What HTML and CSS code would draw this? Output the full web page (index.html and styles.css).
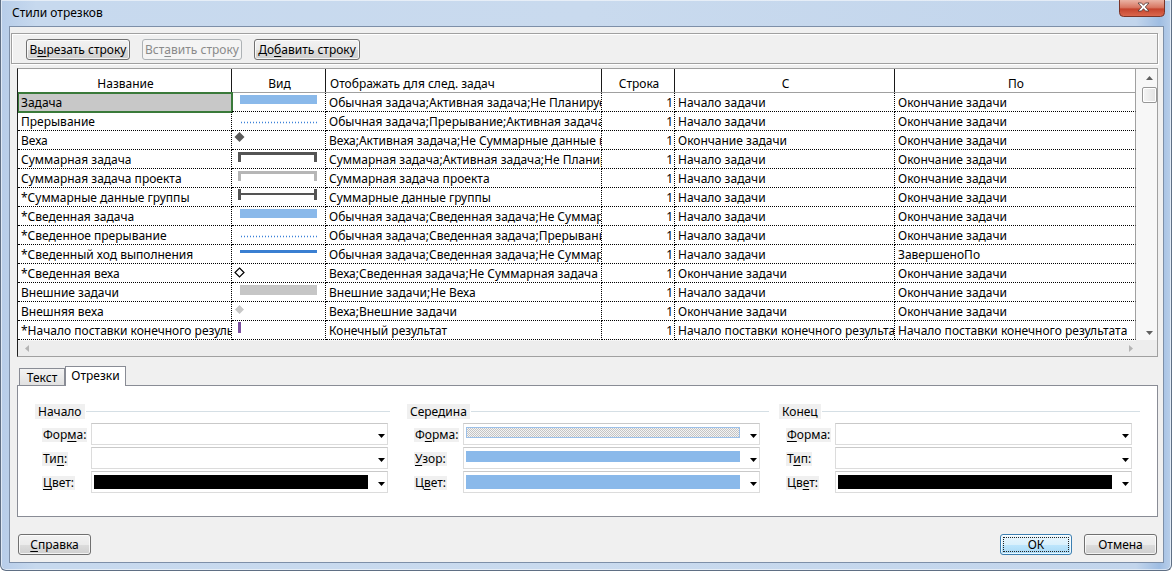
FILE: index.html
```html
<!DOCTYPE html>
<html lang="ru">
<head>
<meta charset="utf-8">
<title>Стили отрезков</title>
<link rel="stylesheet" href="styles.css">
</head>
<body>
<div class="desktop">
  <div class="window">
    <div class="titlebar">
      <span class="title">Стили отрезков</span>
      <span class="close">
        <svg width="46" height="17" viewBox="0 0 46 17">
          <defs>
            <linearGradient id="cg" x1="0" y1="0" x2="0" y2="1">
              <stop offset="0" stop-color="#eab3a5"/>
              <stop offset="0.45" stop-color="#d87763"/>
              <stop offset="0.55" stop-color="#c5442e"/>
              <stop offset="1" stop-color="#dc6a50"/>
            </linearGradient>
          </defs>
          <path d="M0.5 0 V12.5 Q0.5 16.5 4.5 16.5 H41.5 Q45.5 16.5 45.5 12.5 V0" fill="url(#cg)" stroke="#7a3428"/>
          <polygon points="19,3 22.5,3 24.5,5.3 26.5,3 30,3 26.3,7 30,11 26.5,11 24.5,8.7 22.5,11 19,11 22.7,7" fill="#fff" stroke="#4a3632" stroke-width="0.8"/>
        </svg>
      </span>
    </div>
    <div class="client">
      <div class="toolbar">
        <button class="btn btn-cut">В<u>ы</u>резать строку</button>
        <button class="btn btn-paste" disabled>Вст<u>а</u>вить строку</button>
        <button class="btn btn-add">До<u>б</u>авить строку</button>
      </div>

      <div class="grid">
        <div class="table">
          <div class="thead">
            <div class="h c1 hc">Название</div>
            <div class="h c2 hc">Вид</div>
            <div class="h c3">Отображать для след. задач</div>
            <div class="h c4 hc">Строка</div>
            <div class="h c5 hc">С</div>
            <div class="h c6 hc">По</div>
          </div>

          <div class="tr">
            <div class="d c1 sel">Задача</div>
            <div class="d c2"><svg class="vid" width="93" height="18"><rect x="8" y="2" width="77" height="9" fill="#8ab9ea"/></svg></div>
            <div class="d c3">Обычная задача;Активная задача;Не Планируемая вручную</div>
            <div class="d c4">1</div>
            <div class="d c5">Начало задачи</div>
            <div class="d c6">Окончание задачи</div>
          </div>
          <div class="tr">
            <div class="d c1">Прерывание</div>
            <div class="d c2"><svg class="vid" width="93" height="18"><line x1="9" y1="10.5" x2="85" y2="10.5" stroke="#3a80d8" stroke-width="1.5" stroke-dasharray="1 2"/></svg></div>
            <div class="d c3">Обычная задача;Прерывание;Активная задача;Не Суммарная задача</div>
            <div class="d c4">1</div>
            <div class="d c5">Начало задачи</div>
            <div class="d c6">Окончание задачи</div>
          </div>
          <div class="tr">
            <div class="d c1">Веха</div>
            <div class="d c2"><svg class="vid" width="93" height="18"><path d="M7.5 1 L12.5 6 L7.5 11 L2.5 6 Z" fill="#5a5a5a"/></svg></div>
            <div class="d c3">Веха;Активная задача;Не Суммарные данные группы</div>
            <div class="d c4">1</div>
            <div class="d c5">Окончание задачи</div>
            <div class="d c6">Окончание задачи</div>
          </div>
          <div class="tr">
            <div class="d c1">Суммарная задача</div>
            <div class="d c2"><svg class="vid" width="93" height="18"><path d="M6 2 H85 V12 H82 V5 H9 V12 H6 Z" fill="#545454"/></svg></div>
            <div class="d c3">Суммарная задача;Активная задача;Не Планируемая вручную</div>
            <div class="d c4">1</div>
            <div class="d c5">Начало задачи</div>
            <div class="d c6">Окончание задачи</div>
          </div>
          <div class="tr">
            <div class="d c1">Суммарная задача проекта</div>
            <div class="d c2"><svg class="vid" width="93" height="18"><path d="M6 2 H85 V12 H82 V5 H9 V12 H6 Z" fill="#b6b6b6"/></svg></div>
            <div class="d c3">Суммарная задача проекта</div>
            <div class="d c4">1</div>
            <div class="d c5">Начало задачи</div>
            <div class="d c6">Окончание задачи</div>
          </div>
          <div class="tr">
            <div class="d c1">*Суммарные данные группы</div>
            <div class="d c2"><svg class="vid" width="93" height="18"><g fill="#545454"><rect x="6" y="1" width="3" height="11"/><rect x="82" y="1" width="3" height="11"/><rect x="6" y="5" width="79" height="2"/></g></svg></div>
            <div class="d c3">Суммарные данные группы</div>
            <div class="d c4">1</div>
            <div class="d c5">Начало задачи</div>
            <div class="d c6">Окончание задачи</div>
          </div>
          <div class="tr">
            <div class="d c1">*Сведенная задача</div>
            <div class="d c2"><svg class="vid" width="93" height="18"><rect x="8" y="2" width="77" height="9" fill="#8ab9ea"/></svg></div>
            <div class="d c3">Обычная задача;Сведенная задача;Не Суммарная задача</div>
            <div class="d c4">1</div>
            <div class="d c5">Начало задачи</div>
            <div class="d c6">Окончание задачи</div>
          </div>
          <div class="tr">
            <div class="d c1">*Сведенное прерывание</div>
            <div class="d c2"><svg class="vid" width="93" height="18"><line x1="9" y1="10.5" x2="85" y2="10.5" stroke="#3a80d8" stroke-width="1.5" stroke-dasharray="1 2"/></svg></div>
            <div class="d c3">Обычная задача;Сведенная задача;Прерывание</div>
            <div class="d c4">1</div>
            <div class="d c5">Начало задачи</div>
            <div class="d c6">Окончание задачи</div>
          </div>
          <div class="tr">
            <div class="d c1">*Сведенный ход выполнения</div>
            <div class="d c2"><svg class="vid" width="93" height="18"><rect x="8" y="5" width="77" height="3" fill="#3b80d2"/></svg></div>
            <div class="d c3">Обычная задача;Сведенная задача;Не Суммарная задача</div>
            <div class="d c4">1</div>
            <div class="d c5">Начало задачи</div>
            <div class="d c6">ЗавершеноПо</div>
          </div>
          <div class="tr">
            <div class="d c1">*Сведенная веха</div>
            <div class="d c2"><svg class="vid" width="93" height="18"><path d="M7.5 4 L12 8.5 L7.5 13 L3 8.5 Z" fill="#fff" stroke="#000" stroke-width="1.2"/></svg></div>
            <div class="d c3">Веха;Сведенная задача;Не Суммарная задача</div>
            <div class="d c4">1</div>
            <div class="d c5">Окончание задачи</div>
            <div class="d c6">Окончание задачи</div>
          </div>
          <div class="tr">
            <div class="d c1">Внешние задачи</div>
            <div class="d c2"><svg class="vid" width="93" height="18"><rect x="8" y="2" width="77" height="10" fill="#c6c6c6"/></svg></div>
            <div class="d c3">Внешние задачи;Не Веха</div>
            <div class="d c4">1</div>
            <div class="d c5">Начало задачи</div>
            <div class="d c6">Окончание задачи</div>
          </div>
          <div class="tr">
            <div class="d c1">Внешняя веха</div>
            <div class="d c2"><svg class="vid" width="93" height="18"><path d="M7.5 3 L12 7.5 L7.5 12 L3 7.5 Z" fill="#c8c8c8"/></svg></div>
            <div class="d c3">Веха;Внешние задачи</div>
            <div class="d c4">1</div>
            <div class="d c5">Окончание задачи</div>
            <div class="d c6">Окончание задачи</div>
          </div>
          <div class="tr">
            <div class="d c1">*Начало поставки конечного результата</div>
            <div class="d c2"><svg class="vid" width="93" height="18"><rect x="6" y="1" width="3" height="11" fill="#7a4f9e"/></svg></div>
            <div class="d c3">Конечный результат</div>
            <div class="d c4">1</div>
            <div class="d c5">Начало поставки конечного результата</div>
            <div class="d c6">Начало поставки конечного результата</div>
          </div>
        </div>

        <div class="vscroll">
          <svg class="arr-up" width="7" height="4"><path d="M0 4 L3.5 0 L7 4 Z" fill="#5f5f5f"/></svg>
          <div class="thumb"></div>
          <div class="vspace"></div>
          <svg class="arr-down" width="7" height="4"><path d="M0 0 L3.5 4 L7 0 Z" fill="#5f5f5f"/></svg>
        </div>
        <div class="hscroll">
          <svg width="4" height="7"><path d="M4 0 L0 3.5 L4 7 Z" fill="#b4b4b4"/></svg>
          <svg width="4" height="7"><path d="M0 0 L4 3.5 L0 7 Z" fill="#b4b4b4"/></svg>
        </div>
        <div class="corner"></div>
      </div>

      <div class="tabs">
        <div class="tab tab-off">Текст</div>
        <div class="tab tab-on">Отрезки</div>
      </div>
      <div class="panel">
        <div class="groups">
          <div class="group g1">
            <div class="ghead"><span class="glabel">Начало</span><span class="gline"></span></div>
            <div class="frow"><span class="flabel"><span>Фор<u>м</u>а:</span></span><div class="combo"><span class="sw"></span><svg class="carr" width="7" height="4"><path d="M0 0 L3.5 4 L7 0 Z" fill="#000"/></svg></div></div>
            <div class="frow"><span class="flabel"><span>Ти<u>п</u>:</span></span><div class="combo"><span class="sw"></span><svg class="carr" width="7" height="4"><path d="M0 0 L3.5 4 L7 0 Z" fill="#000"/></svg></div></div>
            <div class="frow"><span class="flabel"><span><u>Ц</u>вет:</span></span><div class="combo"><span class="sw sw-black"></span><svg class="carr" width="7" height="4"><path d="M0 0 L3.5 4 L7 0 Z" fill="#000"/></svg></div></div>
          </div>
          <div class="group g2">
            <div class="ghead"><span class="glabel">Середина</span><span class="gline"></span></div>
            <div class="frow"><span class="flabel"><span>Ф<u>о</u>рма:</span></span><div class="combo"><span class="sw sw-pattern"></span><svg class="carr" width="7" height="4"><path d="M0 0 L3.5 4 L7 0 Z" fill="#000"/></svg></div></div>
            <div class="frow"><span class="flabel"><span><u>У</u>зор:</span></span><div class="combo"><span class="sw sw-blue-thin"></span><svg class="carr" width="7" height="4"><path d="M0 0 L3.5 4 L7 0 Z" fill="#000"/></svg></div></div>
            <div class="frow"><span class="flabel"><span>Ц<u>в</u>ет:</span></span><div class="combo"><span class="sw sw-blue"></span><svg class="carr" width="7" height="4"><path d="M0 0 L3.5 4 L7 0 Z" fill="#000"/></svg></div></div>
          </div>
          <div class="group g3">
            <div class="ghead"><span class="glabel">Конец</span><span class="gline"></span></div>
            <div class="frow"><span class="flabel"><span><u>Ф</u>орма:</span></span><div class="combo"><span class="sw"></span><svg class="carr" width="7" height="4"><path d="M0 0 L3.5 4 L7 0 Z" fill="#000"/></svg></div></div>
            <div class="frow"><span class="flabel"><span>Т<u>и</u>п:</span></span><div class="combo"><span class="sw"></span><svg class="carr" width="7" height="4"><path d="M0 0 L3.5 4 L7 0 Z" fill="#000"/></svg></div></div>
            <div class="frow"><span class="flabel"><span>Цв<u>е</u>т:</span></span><div class="combo"><span class="sw sw-black"></span><svg class="carr" width="7" height="4"><path d="M0 0 L3.5 4 L7 0 Z" fill="#000"/></svg></div></div>
          </div>
        </div>
      </div>

      <div class="footer">
        <button class="btn btn-help"><u>С</u>правка</button>
        <span class="fspace"></span>
        <button class="btn btn-ok"><span class="focus">ОК</span></button>
        <button class="btn btn-cancel">Отмена</button>
      </div>
    </div>
  </div>
</div>
</body>
</html>
```

FILE: styles.css
```css
* { box-sizing: border-box; }
html, body { margin: 0; padding: 0; }
body {
  font-family: "Noto Sans", "Segoe UI", "DejaVu Sans", sans-serif;
  font-size: 12px;
  color: #000;
  background: #fff;
}
u { text-decoration: underline; text-underline-offset: 2px; }

.desktop {
  position: relative;
  width: 1176px;
  height: 572px;
  overflow: hidden;
  background: #fff;
}

.window {
  position: absolute;
  left: 0;
  top: 0;
  width: 1172px;
  height: 571px;
  padding: 0 7px 7px 8px;
  border: 1px solid #5f6f84;
  border-top: 0;
  border-radius: 0 0 6px 6px;
  background: linear-gradient(90deg, #b7cde9 0%, #c7d9ee 3%, #c9daee 50%, #c2d5ec 97%, #9fbde2 99%, #b9cfea 100%);
  box-shadow: inset 0 0 0 1px rgba(255,255,255,0.55);
  display: flex;
  flex-direction: column;
}

.titlebar {
  height: 26px;
  display: flex;
  justify-content: space-between;
  align-items: flex-start;
  flex: none;
}
.title {
  padding: 5px 0 0 3px;
  line-height: 16px;
  color: #000;
}
.close {
  display: block;
  width: 46px;
  height: 17px;
  margin-right: -1px;
}
.close svg { display: block; }

.client {
  flex: 1;
  background: #f0f0f0;
  border: 1px solid #7d8fa8;
  padding: 6px 5px 0 1px;
  display: flex;
  flex-direction: column;
}

/* buttons */
.btn {
  height: 21px;
  padding: 0;
  font: inherit;
  font-size: 12px;
  line-height: 18px;
  color: #000;
  border: 1px solid #707070;
  border-radius: 3px;
  background: linear-gradient(#f2f2f2 0%, #ebebeb 50%, #dddddd 50%, #cfcfcf 100%);
  box-shadow: inset 0 0 0 1px rgba(255,255,255,0.75);
  text-align: center;
  white-space: nowrap;
}
.btn:disabled {
  border-color: #adb2b5;
  background: #f4f4f4;
  color: #8a8a8a;
  box-shadow: none;
}

.toolbar {
  height: 31px;
  border: 1px solid #a0a0a0;
  box-shadow: inset 1px 1px 0 #fff, 1px 1px 0 #fff;
  padding: 5px 0 0 14px;
  display: flex;
  gap: 12px;
  flex: none;
}
.btn-cut { width: 104px; }
.btn-paste { width: 100px; }
.btn-add { width: 106px; }

/* grid */
.grid {
  margin: 4px 0 0 6px;
  width: 1141px;
  height: 289px;
  border: 1px solid #a0a0a0;
  border-left-color: #202020;
  display: grid;
  grid-template-columns: 1118px 21px;
  grid-template-rows: 271px 16px;
  background: #fff;
  flex: none;
}
.table { overflow: hidden; }
.thead, .tr {
  display: grid;
  grid-template-columns: 214px 94px 276px 73px 220px 241px;
}
.thead {
  height: 24px;
  border-bottom: 1px solid #a0a0a0;
}
.h {
  border-right: 1px solid #1a1a1a;
  padding: 6px 2px 0 4px;
  line-height: 17px;
  white-space: nowrap;
  overflow: hidden;
}
.h.c6 { border-right-color: #a0a0a0; }
.hc { text-align: center; }
.tr { height: 19px; }
.d {
  border-right: 1px dotted #000;
  border-bottom: 1px dotted #000;
  padding: 0 2px 0 3px;
  line-height: 20px;
  white-space: nowrap;
  overflow: hidden;
}
.d.c2 { padding: 0; }
.d.c4 { text-align: right; padding-right: 1px; }
.d.c6 { border-right: 1px solid #a0a0a0; }
.sel {
  background: #c8c8c8;
  outline: 2px solid #3a7a3a;
  outline-offset: -1px;
}
.vid { display: block; }

.vscroll {
  background: #f7f7f7;
  display: flex;
  flex-direction: column;
  align-items: flex-end;
  padding: 7px 0 5px 0;
}
.arr-up, .arr-down { display: block; margin-right: 4px; }
.thumb {
  width: 15px;
  height: 16px;
  margin-top: 7px;
  border: 1px solid #979797;
  border-radius: 2px;
  background: linear-gradient(90deg, #f5f5f5, #e2e2e2);
  box-shadow: inset 0 0 0 1px #fff;
}
.vspace { flex: 1; }

.hscroll {
  background: #ededed;
  border-top: 1px solid #f6f6f6;
  display: flex;
  justify-content: space-between;
  align-items: center;
  padding: 0 3px 0 7px;
}
.hscroll svg { display: block; }
.corner { background: #ededed; }

/* tabs */
.tabs {
  margin: 9px 0 0 8px;
  height: 19px;
  display: flex;
  align-items: flex-end;
  flex: none;
}
.tab {
  border: 1px solid #898c95;
  border-bottom: 0;
  text-align: center;
  white-space: nowrap;
}
.tab-off {
  width: 46px;
  height: 17px;
  line-height: 17px;
  background: linear-gradient(#f3f3f3, #e1e1e1);
}
.tab-on {
  width: 61px;
  height: 20px;
  line-height: 17px;
  margin-bottom: -1px;
  background: #fff;
  position: relative;
  z-index: 1;
}

.panel {
  margin-left: 6px;
  width: 1141px;
  height: 132px;
  border: 1px solid #898c95;
  background: #fff;
  padding: 18px 0 0 17px;
  flex: none;
}
.groups {
  display: grid;
  grid-template-columns: 372px 372px 361px;
}
.g1 { padding-right: 17px; }
.g2 { padding-right: 10px; }
.ghead {
  display: flex;
  align-items: center;
  height: 15px;
}
.glabel {
  background: #f0f0f0;
  padding: 0 3px;
  line-height: 15px;
}
.gline {
  flex: 1;
  height: 1px;
  background: #d5dfe5;
  margin-left: 1px;
}
.frow {
  display: flex;
  align-items: center;
  height: 22px;
  margin-top: 2px;
}
.ghead + .frow { margin-top: 4px; }
.flabel {
  width: 56px;
  padding-left: 7px;
}
.flabel span {
  background: #f0f0f0;
  padding: 0 1px;
  line-height: 14px;
  display: inline-block;
}
.combo {
  width: 297px;
  height: 22px;
  border: 1px solid #dcdcdc;
  border-top-color: #c9c9c9;
  background: #fff;
  display: flex;
  align-items: flex-start;
  padding: 3px 0 0 2px;
}
.sw {
  width: 274px;
  height: 14px;
}
.sw-black { background: #000; }
.sw-blue { background: #8ab9ea; }
.sw-blue-thin { background: #8ab9ea; height: 11px; }
.sw-pattern {
  height: 11px;
  border: 1px solid #9cc0e8;
  background-color: #fff;
  background-image: repeating-conic-gradient(#c4c4c4 0 25%, #f4f4f4 0 50%);
  background-size: 2px 2px;
}
.carr {
  display: block;
  margin: 7px 0 0 10px;
}

/* footer */
.footer {
  margin-top: 17px;
  display: flex;
  padding-left: 7px;
  flex: none;
}
.fspace { flex: 1; }
.btn-help { width: 73px; }
.btn-ok {
  width: 72px;
  margin-right: 12px;
  border-color: #3c7fb1;
  background: linear-gradient(#eaf6fd 0%, #d9f0fc 50%, #bee6fd 50%, #a7d9f5 100%);
  padding: 2px;
}
.btn-ok .focus {
  display: block;
  height: 15px;
  line-height: 13px;
  border: 1px dotted #222;
}
.btn-cancel { width: 73px; margin-right: 1px; }
```
